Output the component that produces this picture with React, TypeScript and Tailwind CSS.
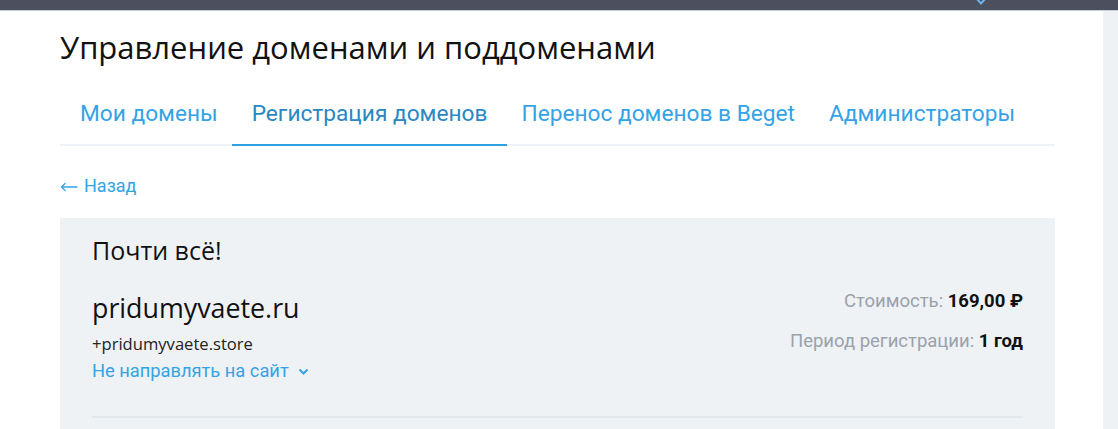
import React from "react";

const tabs = ["Мои домены", "Регистрация доменов", "Перенос доменов в Beget", "Администраторы"];

export default function App() {
  return (
    <div className="w-[1118px] h-[429px] overflow-hidden bg-white flex flex-col">
      <div className="h-[10px] bg-[#4b4f5e] relative shrink-0">
        <svg className="absolute left-[975px] top-[-3px]" width="12" height="9" viewBox="0 0 12 9">
          <path d="M1.5 1.5 L6 6.5 L10.5 1.5" fill="none" stroke="#6ab4ea" strokeWidth="2" />
        </svg>
      </div>
      <div className="h-px bg-[#c5cdd6] shrink-0" />
      <div className="flex flex-1">
        <div className="flex-1 pl-[60px] pr-[48px] flex flex-col">
          <h1
            className="mt-[17px] text-[31px] leading-[38px] text-[#111] font-normal"
            style={{ fontFamily: '"Open Sans", sans-serif' }}
          >
            Управление доменами и поддоменами
          </h1>
          <div
            className="mt-[19px] flex pl-[3px] border-b-2 border-[#eef1f5]"
            style={{ fontFamily: 'Roboto, sans-serif' }}
          >
            {tabs.map((t, i) => (
              <div
                key={t}
                className={
                  "h-[61px] flex items-center text-[22.7px] mb-[-2px] border-b-2 " +
                  (i === 1
                    ? "px-[20px] -mx-[3px] border-[#2fa0e0] text-[#2b87c2]"
                    : "px-[17px] border-transparent text-[#34a3e6]")
                }
              >
                {t}
              </div>
            ))}
          </div>
          <div
            className="mt-[28px] flex items-center gap-[6px] text-[18px] leading-[24px] text-[#34a3e6]"
            style={{ fontFamily: 'Roboto, sans-serif' }}
          >
            <svg width="18" height="10" viewBox="0 0 18 10" className="mt-[1px]">
              <path d="M17.5 5 H1.5 M5.5 1 L1.5 5 L5.5 9" fill="none" stroke="#34a3e6" strokeWidth="1.3" />
            </svg>
            Назад
          </div>
          <div className="mt-[20px] bg-[#eff2f5] px-[32px] pt-[17px] flex-1 flex flex-col">
            <div className="text-[25px] leading-[30px] text-[#111]" style={{ fontFamily: '"Open Sans", sans-serif' }}>
              Почти всё!
            </div>
            <div className="mt-[25px] flex justify-between border-b-2 border-[#e3e8ec] pb-[32px]">
              <div className="flex flex-col">
                <div className="text-[26.8px] leading-[36px] text-[#111]" style={{ fontFamily: '"Open Sans", sans-serif' }}>
                  pridumyvaete.ru
                </div>
                <div className="mt-[6px] text-[16.6px] leading-[24px] text-[#222]" style={{ fontFamily: '"Open Sans", sans-serif' }}>
                  +pridumyvaete.store
                </div>
                <div
                  className="mt-[2px] flex items-center gap-[9px] text-[18.3px] leading-[26px] text-[#34a3e6]"
                  style={{ fontFamily: 'Roboto, sans-serif' }}
                >
                  Не направлять на сайт
                  <svg width="11" height="8" viewBox="0 0 11 8" className="mt-[2px]">
                    <path d="M1.5 1.5 L5.5 5.5 L9.5 1.5" fill="none" stroke="#34a3e6" strokeWidth="2" />
                  </svg>
                </div>
              </div>
              <div className="flex flex-col items-end text-[18.5px] leading-[24px]" style={{ fontFamily: 'Roboto, sans-serif' }}>
                <div className="-mt-[1px]">
                  <span className="text-[#9aa1ab]">Стоимость: </span>
                  <span className="text-[#111] font-bold">169,00 ₽</span>
                </div>
                <div className="mt-[16px]">
                  <span className="text-[#9aa1ab]">Период регистрации: </span>
                  <span className="text-[#111] font-bold">1 год</span>
                </div>
              </div>
            </div>
          </div>
        </div>
        <div className="w-[15px] bg-[#eef2f5] shrink-0" />
      </div>
    </div>
  );
}
